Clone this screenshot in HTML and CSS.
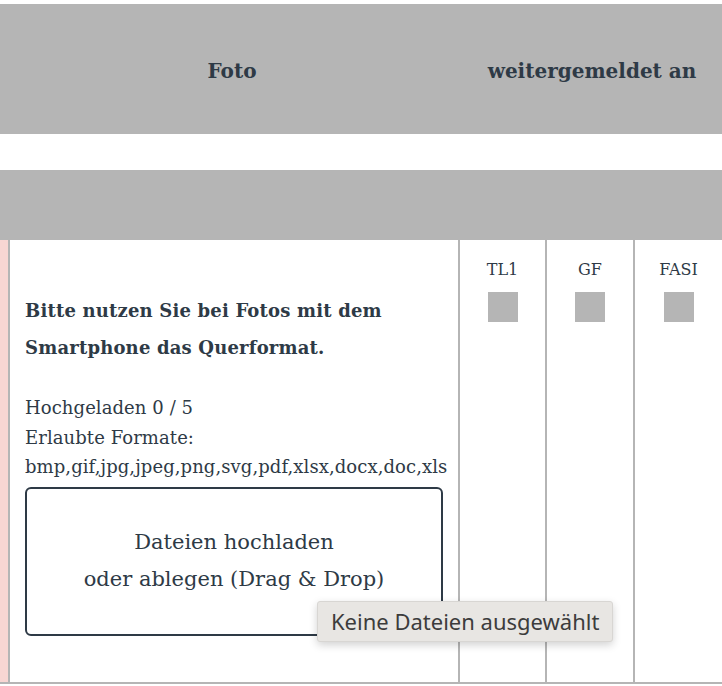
FILE: index.html
```html
<!DOCTYPE html>
<html lang="de">
<head>
  <meta charset="UTF-8">
  <title>Meldung – Foto</title>
  <link rel="stylesheet" href="styles.css">
</head>
<body>
  <div class="table">
    <div class="head-row">
      <div class="head-cell foto-head">Foto</div>
      <div class="head-cell report-head">weitergemeldet an</div>
    </div>
    <div class="spacer"></div>
    <div class="sub-head"></div>
    <div class="row">
      <div class="marker"></div>
      <div class="cell foto-cell">
        <p class="hint">Bitte nutzen Sie bei Fotos mit dem Smartphone das Querformat.</p>
        <p class="info">Hochgeladen 0 / 5<br>Erlaubte Formate:<br>bmp,gif,jpg,jpeg,png,svg,pdf,xlsx,docx,doc,xls</p>
        <label class="upload">
          <span>Dateien hochladen<br>oder ablegen (Drag &amp; Drop)</span>
        </label>
        <div class="tooltip">Keine Dateien ausgewählt</div>
      </div>
      <div class="cell check-cell">
        <span>TL1</span>
        <span class="box"></span>
      </div>
      <div class="cell check-cell">
        <span>GF</span>
        <span class="box"></span>
      </div>
      <div class="cell check-cell last">
        <span>FASI</span>
        <span class="box"></span>
      </div>
    </div>
  </div>
</body>
</html>
```

FILE: styles.css
```css
body { margin: 0; background: #fff; color: #2e3a46; font-family: "DejaVu Serif", serif; overflow: hidden; }
.table { margin-top: 4px; width: 722px; }
.head-row { display: grid; grid-template-columns: 459px 263px; height: 130px; background: #b5b5b5; align-items: center; }
.head-cell { text-align: center; font-weight: bold; font-size: 20px; padding-top: 3px; }
.foto-head { padding-left: 5px; }
.report-head { padding-left: 3px; }
.spacer { height: 36px; }
.sub-head { height: 70px; background: #b5b5b5; }
.row { display: grid; grid-template-columns: 8px 450px 87px 88px 89px; height: 442px; border-bottom: 2px solid #b5b5b5; }
.marker { background: #f8d6d3; }
.cell { border-left: 2px solid #b5b5b5; }
.foto-cell { position: relative; padding: 52px 0 0 15px; }
.hint { margin: 0; font-weight: bold; font-size: 18px; line-height: 37px; letter-spacing: 0.18px; width: 410px; }
.info { margin: 27px 0 0; font-size: 18px; line-height: 29.5px; letter-spacing: 0.08px; }
.upload { display: flex; align-items: center; justify-content: center; box-sizing: border-box; width: 418px; height: 149px; margin-top: 5px; border: 2px solid #2e3a46; border-radius: 6px; text-align: center; font-size: 21px; line-height: 37px; }
.tooltip { position: absolute; left: 307px; top: 361px; padding: 0 13px; height: 39px; line-height: 38px; background: #e8e6e3; border: 1px solid #d8d6d3; border-radius: 3px; box-shadow: 0 3px 8px rgba(0,0,0,0.18); font-family: "Noto Sans", "Liberation Sans", sans-serif; font-size: 22px; color: #3c3c3c; white-space: nowrap; }
.check-cell { display: flex; flex-direction: column; align-items: center; padding-top: 18px; font-size: 16px; line-height: 24px; }
.box { width: 30px; height: 30px; margin-top: 10px; background: #b5b5b5; }
```
